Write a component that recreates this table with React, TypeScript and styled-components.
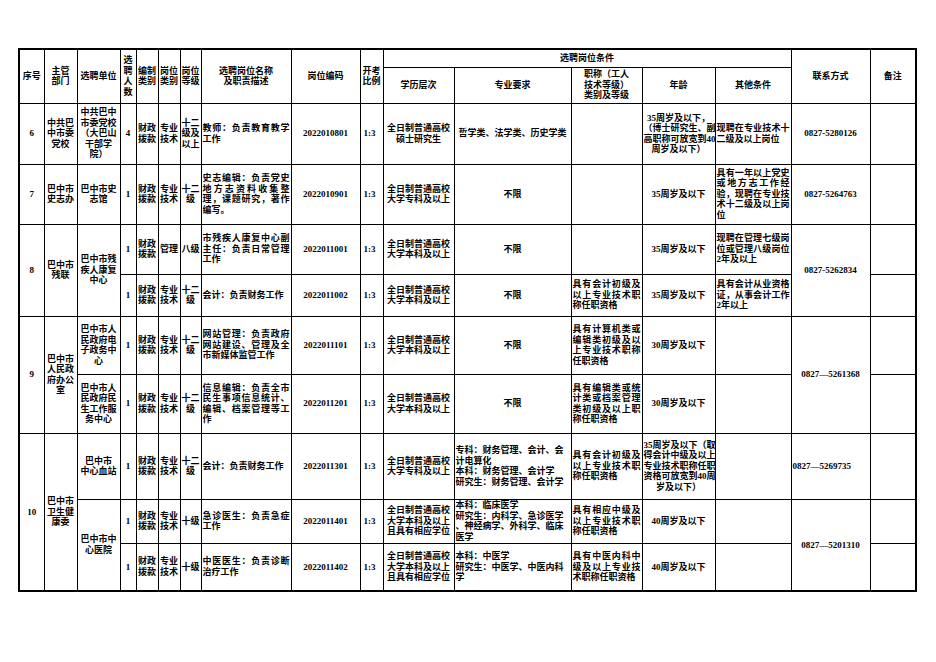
import React from "react";
import styled, { createGlobalStyle } from "styled-components";

const GlobalStyle = createGlobalStyle`
  html, body {
    margin: 0;
    padding: 0;
    background: #ffffff;
  }
  body {
    font-family: "Liberation Serif", "Noto Sans CJK SC", serif;
    color: #000;
  }
`;

const Page = styled.div`
  padding: 48px 0 0 18px;
`;

const Sheet = styled.table`
  border-collapse: collapse;
  table-layout: fixed;
  width: 897px;
  border: 2px solid #000;
  font-size: 9px;
  line-height: 10.5px;
  font-weight: 700;
  color: #000;
`;

const Column = styled.col<{ $w: number }>`
  width: ${(p) => p.$w}px;
`;

const Row = styled.tr<{ $h: number }>`
  height: ${(p) => p.$h}px;
`;

const HeadCell = styled.th`
  border: 1px solid #000;
  padding: 0 1px;
  text-align: center;
  vertical-align: middle;
  font-weight: 700;
`;

const Cell = styled.td<{ $align: "left" | "center"; $indent: number }>`
  border: 1px solid #000;
  padding: 0 1px 0 ${(p) => 1 + p.$indent}px;
  text-align: ${(p) => p.$align};
  vertical-align: middle;
  overflow: visible;
`;

const Line = styled.div<{ $justify: boolean }>`
  white-space: ${(p) => (p.$justify ? "normal" : "nowrap")};
  ${(p) =>
    p.$justify
      ? "text-align: justify; text-align-last: justify;"
      : ""}
`;

type Text = string | string[];

const Lines: React.FC<{ text: Text; justify?: boolean }> = ({ text, justify }) => {
  const lines = Array.isArray(text) ? text : [text];
  return (
    <>
      {lines.map((l, i) => (
        <Line key={i} $justify={!!justify && i < lines.length - 1}>
          {l}
        </Line>
      ))}
    </>
  );
};

const widths = [25, 33, 43, 16, 22, 22, 21, 90, 69, 23, 71, 117, 71, 73, 76, 79, 46];

type CellDef = {
  t: Text;
  rs?: number;
  align?: "left" | "center";
  justify?: boolean;
  indent?: number;
};

type RowDef = { h: number; cells: CellDef[] };

const C = (t: Text, extra: Partial<CellDef> = {}): CellDef => ({ t, ...extra });
const L = (t: Text, extra: Partial<CellDef> = {}): CellDef => ({ t, align: "left", ...extra });
const J = (t: Text, extra: Partial<CellDef> = {}): CellDef => ({ t, align: "left", justify: true, ...extra });
const R = (): CellDef => ({ t: "1:3", align: "left", indent: 2 });

const FIN = ["财政", "拨款"];
const TECH = ["专业", "技术"];
const G12 = ["十二", "级"];
const EDU_BK = ["全日制普通高校", "大学本科及以上"];
const EDU_ZK = ["全日制普通高校", "大学专科及以上"];
const EDU_DEG = ["全日制普通高校", "大学本科及以上", "且具有相应学位"];

const rows: RowDef[] = [
  {
    h: 61,
    cells: [
      C("6"),
      C(["中共巴", "中市委", "党校"]),
      C(["中共巴中", "市委党校", "（大巴山", "干部学", "院）"]),
      C("4"),
      C(FIN),
      C(TECH),
      C(["十二", "级及", "以上"]),
      J(["教师：负责教育教学", "工作"]),
      C("2022010801"),
      R(),
      C(["全日制普通高校", "硕士研究生"]),
      C("哲学类、法学类、历史学类"),
      C(""),
      C(["35周岁及以下，", "（博士研究生、副", "高职称可放宽到40", "周岁及以下）"]),
      J(["现聘在专业技术十", "二级及以上岗位"]),
      C("0827-5280126"),
      C(""),
    ],
  },
  {
    h: 60,
    cells: [
      C("7"),
      C(["巴中市", "史志办"]),
      C(["巴中市史", "志馆"]),
      C("1"),
      C(FIN),
      C(TECH),
      C(G12),
      J(["史志编辑：负责党史", "地方志资料收集整", "理，课题研究，著作", "编写。"]),
      C("2022010901"),
      R(),
      C(EDU_ZK),
      C("不限"),
      C(""),
      C("35周岁及以下"),
      J(["具有一年以上党史", "或地方志工作经", "验，现聘在专业技", "术十二级及以上岗", "位"]),
      C("0827-5264763"),
      C(""),
    ],
  },
  {
    h: 50,
    cells: [
      C("8", { rs: 2 }),
      C(["巴中市", "残联"], { rs: 2 }),
      C(["巴中市残", "疾人康复", "中心"], { rs: 2 }),
      C("1"),
      C(FIN),
      C("管理"),
      C("八级"),
      J(["市残疾人康复中心副", "主任：负责日常管理", "工作"]),
      C("2022011001"),
      R(),
      C(EDU_BK),
      C("不限"),
      C(""),
      C("35周岁及以下"),
      J(["现聘在管理七级岗", "位或管理八级岗位", "2年及以上"]),
      C("0827-5262834", { rs: 2 }),
      C(""),
    ],
  },
  {
    h: 42,
    cells: [
      C("1"),
      C(FIN),
      C(TECH),
      C(G12),
      L("会计：负责财务工作"),
      C("2022011002"),
      R(),
      C(EDU_BK),
      C("不限"),
      J(["具有会计初级及", "以上专业技术职", "称任职资格"]),
      C("35周岁及以下"),
      J(["具有会计从业资格", "证，从事会计工作", "2年以上"]),
      C(""),
    ],
  },
  {
    h: 58,
    cells: [
      C("9", { rs: 2 }),
      C(["巴中市", "人民政", "府办公", "室"], { rs: 2 }),
      C(["巴中市人", "民政府电", "子政务中", "心"]),
      C("1"),
      C(FIN),
      C(TECH),
      C(G12),
      J(["网站管理：负责政府", "网站建设、管理及全", "市新媒体监管工作"]),
      C("2022011101"),
      R(),
      C(EDU_BK),
      C("不限"),
      J(["具有计算机类或", "编辑类初级及以", "上专业技术职称", "任职资格"]),
      C("30周岁及以下"),
      C(""),
      C("0827—5261368", { rs: 2 }),
      C(""),
    ],
  },
  {
    h: 59,
    cells: [
      C(["巴中市人", "民政府民", "生工作服", "务中心"]),
      C("1"),
      C(FIN),
      C(TECH),
      C(G12),
      J(["信息编辑：负责全市", "民生事项信息统计、", "编辑、档案管理等工", "作"]),
      C("2022011201"),
      R(),
      C(EDU_BK),
      C("不限"),
      J(["具有编辑类或统", "计类或档案管理", "类初级及以上职", "称任职资格"]),
      C("30周岁及以下"),
      C(""),
      C(""),
    ],
  },
  {
    h: 66,
    cells: [
      C("10", { rs: 3 }),
      C(["巴中市", "卫生健", "康委"], { rs: 3 }),
      C(["巴中市", "中心血站"]),
      C("1"),
      C(FIN),
      C(TECH),
      C(G12),
      L("会计：负责财务工作"),
      C("2022011301"),
      R(),
      C(EDU_ZK),
      L(["专科：财务管理、会计、会", "计电算化", "本科：财务管理、会计学", "研究生：财务管理、会计学"]),
      J(["具有会计初级及", "以上专业技术职", "称任职资格"]),
      C(["35周岁及以下（取", "得会计中级及以上", "专业技术职称任职", "资格可放宽到40周", "岁及以下）"]),
      C(""),
      L("0827—5269735"),
      C(""),
    ],
  },
  {
    h: 44,
    cells: [
      C(["巴中市中", "心医院"], { rs: 2 }),
      C("1"),
      C(FIN),
      C(TECH),
      C("十级"),
      J(["急诊医生：负责急症", "工作"]),
      C("2022011401"),
      R(),
      C(EDU_DEG),
      L(["本科：临床医学", "研究生：内科学、急诊医学", "、神经病学、外科学、临床", "医学"]),
      J(["具有相应中级及", "以上专业技术职", "称任职资格"]),
      C("40周岁及以下"),
      C(""),
      C("0827—5201310", { rs: 2 }),
      C(""),
    ],
  },
  {
    h: 48,
    cells: [
      C("1"),
      C(FIN),
      C(TECH),
      C("十级"),
      J(["中医医生：负责诊断", "治疗工作"]),
      C("2022011402"),
      R(),
      C(EDU_DEG),
      L(["本科：中医学", "研究生：中医学、中医内科", "学"]),
      J(["具有中医内科中", "级及以上专业技", "术职称任职资格"]),
      C("40周岁及以下"),
      C(""),
      C(""),
    ],
  },
];

const H: React.FC<{ t: Text; rs?: number; cs?: number }> = ({ t, rs, cs }) => (
  <HeadCell rowSpan={rs} colSpan={cs}>
    <Lines text={t} />
  </HeadCell>
);

export default function App() {
  return (
    <>
      <GlobalStyle />
      <Page>
        <Sheet>
          <colgroup>
            {widths.map((w, i) => (
              <Column key={i} $w={w} />
            ))}
          </colgroup>
          <thead>
            <Row $h={18}>
              <H t="序号" rs={2} />
              <H t={["主管", "部门"]} rs={2} />
              <H t="选聘单位" rs={2} />
              <H t={["选", "聘", "人", "数"]} rs={2} />
              <H t={["编制", "类别"]} rs={2} />
              <H t={["岗位", "类别"]} rs={2} />
              <H t={["岗位", "等级"]} rs={2} />
              <H t={["选聘岗位名称", "及职责描述"]} rs={2} />
              <H t="岗位编码" rs={2} />
              <H t={["开考", "比例"]} rs={2} />
              <H t="选聘岗位条件" cs={5} />
              <H t="联系方式" rs={2} />
              <H t="备注" rs={2} />
            </Row>
            <Row $h={36}>
              <H t="学历层次" />
              <H t="专业要求" />
              <H t={["职称（工人", "技术等级）", "类别及等级"]} />
              <H t="年龄" />
              <H t="其他条件" />
            </Row>
          </thead>
          <tbody>
            {rows.map((r, ri) => (
              <Row key={ri} $h={r.h}>
                {r.cells.map((c, ci) => (
                  <Cell
                    key={ci}
                    rowSpan={c.rs}
                    $align={c.align ?? "center"}
                    $indent={c.indent ?? 0}
                  >
                    <Lines text={c.t} justify={c.justify} />
                  </Cell>
                ))}
              </Row>
            ))}
          </tbody>
        </Sheet>
      </Page>
    </>
  );
}
